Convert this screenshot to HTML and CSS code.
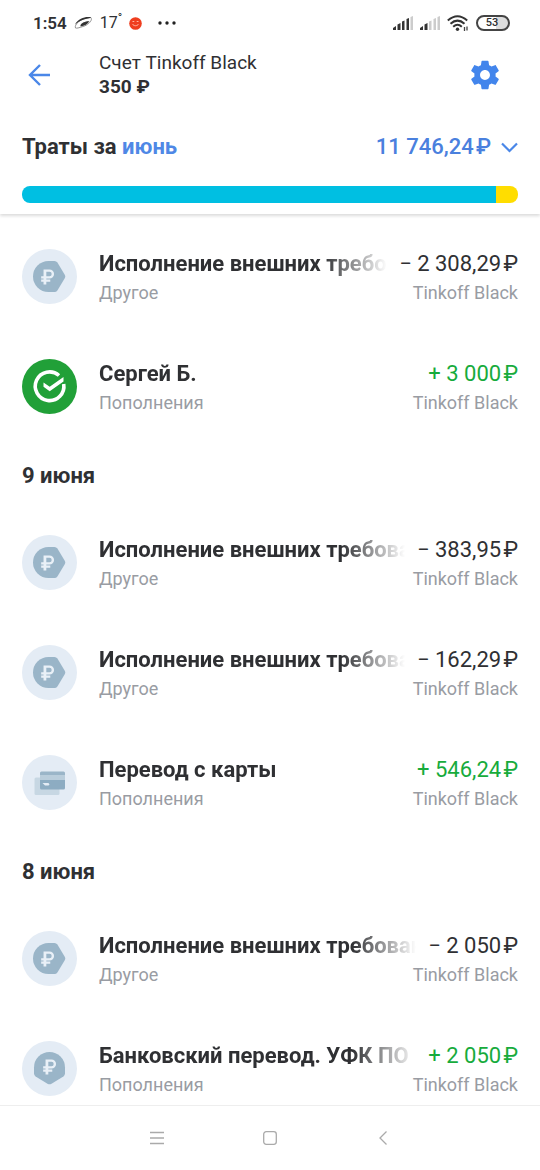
FILE: index.html
```html
<!DOCTYPE html>
<html lang="ru">
<head>
<meta charset="utf-8">
<meta name="viewport" content="width=device-width, initial-scale=1">
<title>Счет Tinkoff Black</title>
<link rel="stylesheet" href="styles.css">
</head>
<body>
<svg class="sprite" aria-hidden="true">
  <symbol id="rub" viewBox="0 0 24 24">
    <path d="M7 3h7.500a5.800 5.800 0 0 1 0 11.600H10.500v1.200h5V18.500h-5V22H7v-3.500H4v-2.700h3v-1.200H4v-3h3zM10.500 6v5.600h4a2.800 2.800 0 0 0 0-5.600z" fill="#e9f0f7" fill-rule="evenodd"/>
  </symbol>
  <symbol id="out" viewBox="0 0 55 55">
    <circle cx="27.500" cy="27.500" r="27.500" fill="#e4ecf5"/>
    <path d="M26.500 12h6q1.800 0 2.900 1.600l7.500 12.300q.8 1.600 0 3.200l-7.500 12.300Q34.300 43 32.500 43h-6a15.500 15.500 0 0 1 0-31z" fill="#9ab5c8"/>
    <use href="#rub" x="16" y="18" width="19" height="19"/>
  </symbol>
  <symbol id="in" viewBox="0 0 55 55">
    <circle cx="27.500" cy="27.500" r="27.500" fill="#e4ecf5"/>
    <path d="M12 26.500a15.500 15.500 0 0 1 31 0v6q0 1.800-1.600 2.900l-12.300 7.500q-1.600.8-3.200 0l-12.300-7.500Q12 34.300 12 32.500z" fill="#9ab5c8"/>
    <use href="#rub" x="18" y="16" width="19" height="19"/>
  </symbol>
</svg>
<div class="app">
  <div class="status">
    <div class="status-left">
      <span class="clock">1:54</span>
      <svg width="19" height="14" viewBox="0 0 19 14" aria-hidden="true">
        <path d="M1.500 12C0 9 6 2 16.500 1.500c3 2-2 7.500-7.500 9-4 1.300-6.500 2-7.500 1.500z" fill="none" stroke="#888" stroke-width=".9"/>
        <path d="M1 8.500C5 2 12 .2 17.500 1.500 14 3 11.500 2.500 8.500 4 5 5.500 3.500 6.500 1 8.500zM6.500 9C9 5.500 12.500 5.500 15.500 5c-1.500 3-5 5-9 5.500z" fill="#333"/>
      </svg>
      <span class="temp">17<sup>°</sup></span>
      <svg width="13" height="13" viewBox="0 0 13 13" aria-hidden="true">
        <circle cx="6.500" cy="6.500" r="6.300" fill="#ef3e1f"/>
        <path d="M3.500 4.500h1.800M7.700 4.500h1.800M3.500 7c1 2.300 5 2.300 6 0" fill="none" stroke="#ffb5a2" stroke-width="1"/>
      </svg>
      <svg class="dots" width="18" height="4" viewBox="0 0 18 4" aria-hidden="true" fill="#222"><circle cx="2" cy="2" r="1.700"/><circle cx="9" cy="2" r="1.700"/><circle cx="16" cy="2" r="1.700"/></svg>
    </div>
    <div class="status-right">
      <svg width="20" height="14" viewBox="0 0 20 14" aria-hidden="true"><path d="M0 14v-2l3-2v4zM4.500 14V8.500L7.500 7v7zM9 14V5.500l2.500-1V14zM13.500 14V3L16 2v12z" fill="#333"/><path d="M17.500 1 20 0v14h-2.500z" fill="#ccc"/></svg>
      <svg width="20" height="14" viewBox="0 0 20 14" aria-hidden="true"><path d="M0 14v-2l3-2v4zM4.500 14V8.500L7.500 7v7z" fill="#333"/><path d="M9 14V5.500l2.500-1V14zM13.500 14V3L16 2v12zM17.500 1 20 0v14h-2.500z" fill="#ccc"/></svg>
      <svg width="22" height="17" viewBox="0 0 22 17" aria-hidden="true">
        <g fill="none" stroke="#333" stroke-width="2"><path d="M.8 5.500q9.700-8.500 19.400 0"/><path d="M3.500 8.700q7-6.200 14 0"/><path d="M6.200 11.700q4.300-3.800 8.600 0"/></g>
        <circle cx="10.500" cy="14.200" r="1.700" fill="#333"/><path d="M17.500 12v4M20 11.500v4" stroke="#444" stroke-width="1.300"/>
      </svg>
      <span class="battery">53</span>
    </div>
  </div>

  <header class="top">
    <button class="icon-btn back" aria-label="Назад">
      <svg width="22" height="22" viewBox="0 0 22 22" fill="none" stroke="#4a87e8" stroke-width="2.400"><path d="M22 11H2M12 1 2 11l10 10"/></svg>
    </button>
    <div class="account">
      <h1>Счет Tinkoff Black</h1>
      <strong>350 ₽</strong>
    </div>
    <button class="icon-btn settings" aria-label="Настройки">
      <svg width="34" height="34" viewBox="0 0 24 24" fill="#4285ec"><path d="M19.430 12.980c.04-.32.07-.64.07-.98s-.03-.66-.07-.98l2.110-1.650c.19-.15.24-.42.12-.64l-2-3.460c-.12-.22-.39-.3-.61-.22l-2.490 1c-.52-.4-1.080-.73-1.690-.98l-.38-2.650C14.460 2.180 14.250 2 14 2h-4c-.25 0-.46.18-.49.42l-.38 2.650c-.61.25-1.170.59-1.690.98l-2.490-1c-.23-.09-.49 0-.61.22l-2 3.460c-.13.22-.07.49.12.64l2.110 1.650c-.04.32-.07.65-.07.98s.03.66.07.98l-2.110 1.650c-.19.15-.24.42-.12.64l2 3.460c.12.22.39.3.61.22l2.490-1c.52.4 1.080.73 1.690.98l.38 2.650c.03.24.24.42.49.42h4c.25 0 .46-.18.49-.42l.38-2.650c.61-.25 1.170-.59 1.690-.98l2.490 1c.23.09.49 0 .61-.22l2-3.460c.12-.22.07-.49-.12-.64zM12 15.500c-1.930 0-3.500-1.570-3.500-3.500s1.570-3.500 3.500-3.500 3.500 1.570 3.500 3.500-1.570 3.500-3.500 3.500z"/></svg>
    </button>
  </header>

  <section class="summary">
    <div class="summary-line">
      <h2>Траты за <a href="#month">июнь</a></h2>
      <button class="total">11 746,24&#8202;₽
        <svg width="17" height="11" viewBox="0 0 17 11" fill="none" stroke="#4a87e8" stroke-width="2.200"><path d="M1 1.500 8.500 9 16 1.500"/></svg>
      </button>
    </div>
    <div class="bar"><span class="bar-main"></span><span class="bar-rest"></span></div>
  </section>

  <main class="list">
    <article class="row">
      <svg class="logo"><use href="#out"/></svg>
      <div class="info">
        <div class="line"><h3>Исполнение внешних требо</h3><span class="amount">− 2 308,29&#8202;₽</span></div>
        <div class="line sub"><span>Другое</span><span>Tinkoff Black</span></div>
      </div>
    </article>
    <article class="row">
      <svg class="logo" viewBox="0 0 55 55"><circle cx="27.500" cy="27.500" r="27.500" fill="#21a038"/><path d="M37 16.500A14.300 14.300 0 1 0 41.700 25" fill="none" stroke="#fff" stroke-width="3.600"/><path d="M21.500 23.500l6.200 4.200L41.500 18v4.600l-13.800 9.700-6.200-4.500z" fill="#fff"/></svg>
      <div class="info">
        <div class="line"><h3>Сергей Б.</h3><span class="amount plus">+ 3 000&#8202;₽</span></div>
        <div class="line sub"><span>Пополнения</span><span>Tinkoff Black</span></div>
      </div>
    </article>
    <h2 class="date">9 июня</h2>
    <article class="row">
      <svg class="logo"><use href="#out"/></svg>
      <div class="info">
        <div class="line"><h3>Исполнение внешних требова</h3><span class="amount">− 383,95&#8202;₽</span></div>
        <div class="line sub"><span>Другое</span><span>Tinkoff Black</span></div>
      </div>
    </article>
    <article class="row">
      <svg class="logo"><use href="#out"/></svg>
      <div class="info">
        <div class="line"><h3>Исполнение внешних требова</h3><span class="amount">− 162,29&#8202;₽</span></div>
        <div class="line sub"><span>Другое</span><span>Tinkoff Black</span></div>
      </div>
    </article>
    <article class="row">
      <svg class="logo" viewBox="0 0 55 55"><circle cx="27.500" cy="27.500" r="27.500" fill="#e4ecf5"/><rect x="12.500" y="22.500" width="25" height="17.500" rx="1.500" fill="#c7d7e3"/><path d="M18 20v-2q0-1.500 1.500-1.500h22q1.500 0 1.500 1.500v2z" fill="#9ab5c8"/><path d="M18 20h25v5H18z" fill="#b9cddb"/><path d="M18 25h25v8q0 1.500-1.500 1.500h-22Q18 34.500 18 33z" fill="#8dacc2"/><path d="M20.500 28h6l1 1.500-1 1h-3.500z" fill="#e4ecf5"/></svg>
      <div class="info">
        <div class="line"><h3>Перевод с карты</h3><span class="amount plus">+ 546,24&#8202;₽</span></div>
        <div class="line sub"><span>Пополнения</span><span>Tinkoff Black</span></div>
      </div>
    </article>
    <h2 class="date">8 июня</h2>
    <article class="row">
      <svg class="logo"><use href="#out"/></svg>
      <div class="info">
        <div class="line"><h3>Исполнение внешних требован</h3><span class="amount">− 2 050&#8202;₽</span></div>
        <div class="line sub"><span>Другое</span><span>Tinkoff Black</span></div>
      </div>
    </article>
    <article class="row">
      <svg class="logo"><use href="#in"/></svg>
      <div class="info">
        <div class="line"><h3>Банковский перевод. УФК ПО</h3><span class="amount plus">+ 2 050&#8202;₽</span></div>
        <div class="line sub"><span>Пополнения</span><span>Tinkoff Black</span></div>
      </div>
    </article>
  </main>

  <nav class="nav">
    <button class="icon-btn" aria-label="Меню"><svg width="14" height="14" viewBox="0 0 14 14" stroke="#aaa" stroke-width="1.300"><path d="M0 1.500h14M0 7h14M0 12.500h14"/></svg></button>
    <button class="icon-btn" aria-label="Домой"><svg width="14" height="14" viewBox="0 0 14 14" fill="none" stroke="#aaa" stroke-width="1.300"><rect x=".7" y=".7" width="12.600" height="12.600" rx="2.500"/></svg></button>
    <button class="icon-btn" aria-label="Назад"><svg width="14" height="14" viewBox="0 0 14 14" fill="none" stroke="#aaa" stroke-width="1.300"><path d="M10.500.5 4 7l6.500 6.500"/></svg></button>
  </nav>
</div>
</body>
</html>
```
FILE: styles.css
```css
* { box-sizing: border-box; }
body { margin: 0; background: #fff; color: #2f3033; font-family: Roboto, "Noto Sans", sans-serif; }
h1, h2, h3 { margin: 0; }
button { border: 0; padding: 0; background: none; font: inherit; color: inherit; cursor: pointer; }
svg { display: block; flex: none; }
.sprite { position: absolute; width: 0; height: 0; }

.app { display: flex; flex-direction: column; height: 100vh; }

.status { display: flex; justify-content: space-between; align-items: center; height: 46px; padding: 0 30px 0 33px; flex: none; }
.status-left { display: flex; align-items: center; gap: 7px; }
.status-right { display: flex; align-items: center; gap: 7px; }
.clock { font-size: 17px; font-weight: 600; line-height: 20px; }
.temp { font-size: 16px; line-height: 20px; }
.temp sup { font-size: 12px; line-height: 1px; }
.dots { margin-left: 9px; }
.battery { display: flex; align-items: center; justify-content: center; width: 34px; height: 16px; border: 2px solid #444; border-radius: 8px; background: linear-gradient(90deg, #fff 60%, #ddd 60%); font-size: 11px; font-weight: 500; line-height: 12px; padding-right: 2px; }

.top { display: flex; align-items: center; height: 58px; padding: 0 22px; flex: none; }
.icon-btn { display: flex; align-items: center; justify-content: center; }
.back { width: 33px; }
.account { flex: 1; margin-left: 44px; }
.account h1 { font-size: 19px; font-weight: 400; line-height: 24px; }
.account strong { display: block; font-size: 19px; font-weight: 700; line-height: 24px; }
.settings { width: 66px; }

.summary { flex: none; padding: 27px 22px 11px; box-shadow: 0 2px 3px rgba(0, 0, 0, .14); clip-path: inset(0 0 -8px 0); }
.summary-line { display: flex; justify-content: space-between; align-items: center; line-height: 32px; }
.summary h2 { font-size: 22px; font-weight: 700; }
.summary a { color: #4f88e6; text-decoration: none; }
.total { display: flex; align-items: center; gap: 10px; color: #4a80de; font-size: 22px; font-weight: 500; }
.bar { display: flex; height: 17px; margin-top: 23px; border-radius: 8px; overflow: hidden; }
.bar-main { flex: 95.600; background: #00bfe2; }
.bar-rest { flex: 4.400; background: #ffdd00; }

.list { flex: 1; min-height: 0; overflow: hidden auto; scrollbar-width: none; padding-top: 7px; }
.row { display: flex; align-items: center; height: 110px; padding: 0 22px; gap: 22px; }
.logo { width: 55px; height: 55px; }
.info { flex: 1; min-width: 0; padding-top: 4px; }
.line { display: flex; justify-content: space-between; gap: 12px; font-size: 22px; line-height: 30px; white-space: nowrap; }
.line h3 { flex: 1; min-width: 0; overflow: hidden; font-size: 22px; font-weight: 700; mask-image: linear-gradient(90deg, #000 calc(100% - 64px), transparent); }
.sub { color: #999ca3; font-size: 18px; line-height: 28px; }
.plus { color: #17ab3c; }
.date { padding: 20px 22px 16px; font-size: 22px; font-weight: 700; line-height: 30px; }

.nav { display: flex; justify-content: center; gap: 99px; height: 65px; border-top: 1px solid #eee; flex: none; background: #fff; }
```
